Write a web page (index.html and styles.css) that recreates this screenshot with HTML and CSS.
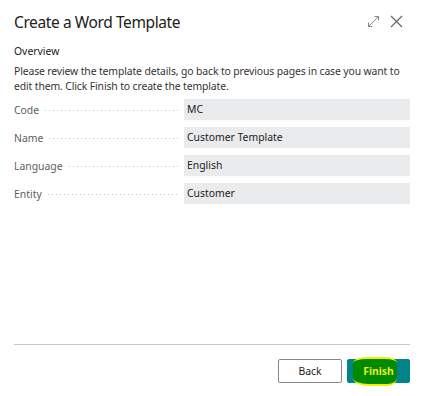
FILE: index.html
```html
<!DOCTYPE html>
<html lang="en">
<head>
    <meta charset="UTF-8">
    <meta name="viewport" content="width=device-width, initial-scale=1.0">
    <title>Create a Word Template</title>
    <link rel="stylesheet" href="styles.css">
</head>
<body>

<div class="dialog">
    <div class="header">
        <h2>Create a Word Template</h2>
        <div class="header-icons">
            <svg class="icon" width="13" height="13" viewBox="0 0 13 13">
                <path d="M1.5 11.5 L11.5 1.5 M7.5 1.5 H11.5 V5.5 M1.5 7.5 V11.5 H5.5" fill="none" stroke="#8a8a8a" stroke-width="1"/>
            </svg>
            <svg class="icon" width="13" height="13" viewBox="0 0 13 13">
                <path d="M1 1 L12 12 M12 1 L1 12" fill="none" stroke="#666" stroke-width="1.2"/>
            </svg>
        </div>
    </div>

    <div class="content">
        <div class="section-title">Overview</div>
        <p class="intro">Please review the template details, go back to previous pages in case you want to edit them. Click Finish to create the template.</p>

        <div class="fields">
            <div class="field-row">
                <span class="label">Code</span>
                <span class="value">MC</span>
            </div>
            <div class="field-row">
                <span class="label">Name</span>
                <span class="value">Customer Template</span>
            </div>
            <div class="field-row">
                <span class="label">Language</span>
                <span class="value">English</span>
            </div>
            <div class="field-row">
                <span class="label">Entity</span>
                <span class="value">Customer</span>
            </div>
        </div>
    </div>

    <div class="footer">
        <button type="button" class="btn">Back</button>
        <button type="button" class="btn primary">
            <span class="highlight"></span>
            <span class="btn-text">Finish</span>
        </button>
    </div>
</div>

</body>
</html>
```

FILE: styles.css
```css
body {
    margin: 0;
    background-color: #fff;
    font-family: "Noto Sans", "Open Sans", sans-serif;
    color: #212121;
}
.dialog {
    width: 423px;
    height: 396px;
    box-sizing: border-box;
    padding: 0 13px 0 14px;
    display: flex;
    flex-direction: column;
}
.header {
    display: flex;
    align-items: center;
    justify-content: space-between;
    height: 43px;
}
h2 {
    margin: 0;
    font-size: 15.5px;
    letter-spacing: -0.4px;
    font-weight: normal;
    color: #212121;
}
.header-icons {
    display: flex;
    gap: 10px;
    padding-right: 7px;
}
.content {
    flex: 1;
}
.section-title {
    font-size: 10.4px;
    line-height: 15px;
    margin-top: 1px;
    color: #212121;
}
.intro {
    font-size: 10.4px;
    letter-spacing: -0.12px;
    line-height: 15px;
    margin: 5px -4px 5px 0;
    color: #333;
}
.fields {
    display: flex;
    flex-direction: column;
    gap: 7px;
}
.field-row {
    display: flex;
    align-items: center;
    height: 21px;
}
.label {
    width: 170px;
    font-size: 10.4px;
    color: #605e5c;
    display: flex;
    align-items: center;
}
.label::after {
    content: "";
    flex: 1;
    height: 1px;
    margin: 1px 6px 0 6px;
    background-image: linear-gradient(to right, #c8c8c8 1px, transparent 1px);
    background-size: 4px 1px;
    background-repeat: repeat-x;
}
.value {
    flex: 1;
    height: 21px;
    line-height: 21px;
    background-color: #eaebec;
    padding-left: 3px;
    font-size: 10.4px;
    color: #212121;
}
.footer {
    border-top: 1px solid #c8c8c8;
    margin-bottom: 13px;
    padding-top: 14px;
    display: flex;
    justify-content: flex-end;
    gap: 5px;
}
.btn {
    position: relative;
    width: 64px;
    height: 24px;
    font-family: "Noto Sans", sans-serif;
    font-size: 10.4px;
    background-color: #fff;
    border: 1px solid #8a8886;
    border-radius: 2px;
    color: #212121;
    padding: 0;
}
.btn.primary {
    width: 63px;
    background-color: #00848a;
    border-color: #00848a;
    overflow: visible;
}
.highlight {
    position: absolute;
    left: 5px;
    top: -3px;
    width: 44px;
    height: 25px;
    background-color: #008a00;
    border-style: solid;
    border-color: #f0f000 transparent;
    border-width: 2px 0;
    border-radius: 14px 12px 10px 16px / 6px 6px 8px 8px;
}
.btn-text {
    position: relative;
    font-weight: bold;
    color: #e8f020;
}
```
